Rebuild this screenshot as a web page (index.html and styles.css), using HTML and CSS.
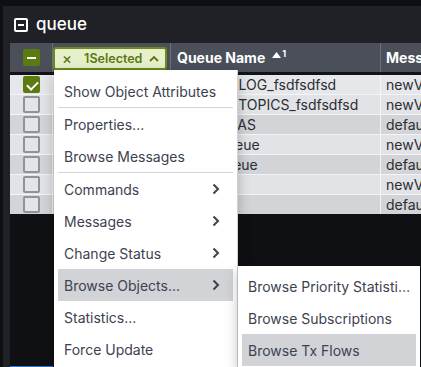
FILE: index.html
```html
<!DOCTYPE html>
<html lang="en">
<head>
    <meta charset="UTF-8">
    <meta name="viewport" content="width=device-width, initial-scale=1.0">
    <title>queue</title>
    <link rel="stylesheet" href="styles.css">
</head>
<body>
    <div class="panel">
        <div class="panel-head">
            <span class="collapse-icon"></span>
            <h1>queue</h1>
        </div>

        <div class="grid">
            <div class="grid-head">
                <div class="col col-check">
                    <span class="box box-on box-partial"></span>
                </div>
                <div class="col col-select">
                    <button class="selected-pill">
                        <span class="pill-x">×</span>
                        <span class="pill-label">1 Selected</span>
                        <svg class="pill-caret" width="10" height="7" viewBox="0 0 10 7"><path d="M1 6l4-4 4 4" fill="none" stroke="currentColor" stroke-width="1.8"/></svg>
                    </button>
                </div>
                <div class="col col-name">
                    Queue Name
                    <span class="sort"><svg width="9" height="6" viewBox="0 0 9 6"><path d="M0 6L4.5 0 9 6z" fill="#fff"/></svg><sup>1</sup></span>
                </div>
                <div class="col col-msg">Message Channel</div>
            </div>

            <div class="rows">
                <div class="row odd selected">
                    <div class="cell col-check"><span class="box box-on"></span></div>
                    <div class="cell col-select"></div>
                    <div class="cell col-name">SYSTEM.LOG_fsdfsdfsd</div>
                    <div class="cell col-msg">newVM1</div>
                </div>
                <div class="row">
                    <div class="cell col-check"><span class="box"></span></div>
                    <div class="cell col-select"></div>
                    <div class="cell col-name">SYSTEM.TOPICS_fsdfsdfsd</div>
                    <div class="cell col-msg">newVM1</div>
                </div>
                <div class="row odd">
                    <div class="cell col-check"><span class="box"></span></div>
                    <div class="cell col-select"></div>
                    <div class="cell col-name">ORDERS.AS</div>
                    <div class="cell col-msg">default</div>
                </div>
                <div class="row">
                    <div class="cell col-check"><span class="box"></span></div>
                    <div class="cell col-select"></div>
                    <div class="cell col-name">Local.Queue</div>
                    <div class="cell col-msg">newVM1</div>
                </div>
                <div class="row odd">
                    <div class="cell col-check"><span class="box"></span></div>
                    <div class="cell col-select"></div>
                    <div class="cell col-name">Test1.Queue</div>
                    <div class="cell col-msg">default</div>
                </div>
                <div class="row">
                    <div class="cell col-check"><span class="box"></span></div>
                    <div class="cell col-select"></div>
                    <div class="cell col-name">Q1</div>
                    <div class="cell col-msg">newVM1</div>
                </div>
                <div class="row odd">
                    <div class="cell col-check"><span class="box"></span></div>
                    <div class="cell col-select"></div>
                    <div class="cell col-name">Q2</div>
                    <div class="cell col-msg">default</div>
                </div>
            </div>

            <div class="grid-fill"></div>
            <div class="scroll-thumb"></div>
        </div>
    </div>

    <ul class="menu">
        <li class="menu-item">Show Object Attributes</li>
        <li class="menu-sep"></li>
        <li class="menu-item">Properties...</li>
        <li class="menu-item">Browse Messages</li>
        <li class="menu-sep"></li>
        <li class="menu-item has-sub">Commands <svg class="chev" width="8" height="12" viewBox="0 0 8 12"><path d="M1.5 1.5L6 6l-4.5 4.5" fill="none" stroke="currentColor" stroke-width="2"/></svg></li>
        <li class="menu-item has-sub">Messages <svg class="chev" width="8" height="12" viewBox="0 0 8 12"><path d="M1.5 1.5L6 6l-4.5 4.5" fill="none" stroke="currentColor" stroke-width="2"/></svg></li>
        <li class="menu-item has-sub">Change Status <svg class="chev" width="8" height="12" viewBox="0 0 8 12"><path d="M1.5 1.5L6 6l-4.5 4.5" fill="none" stroke="currentColor" stroke-width="2"/></svg></li>
        <li class="menu-item has-sub active">Browse Objects... <svg class="chev" width="8" height="12" viewBox="0 0 8 12"><path d="M1.5 1.5L6 6l-4.5 4.5" fill="none" stroke="currentColor" stroke-width="2"/></svg></li>
        <li class="menu-item">Statistics...</li>
        <li class="menu-item">Force Update</li>
    </ul>

    <ul class="menu submenu">
        <li class="menu-item"><span class="clip">Browse Priority Statistics</span></li>
        <li class="menu-item">Browse Subscriptions</li>
        <li class="menu-item active">Browse Tx Flows</li>
    </ul>
</body>
</html>
```

FILE: styles.css
```css
* {
    margin: 0;
    padding: 0;
    box-sizing: border-box;
}

body {
    font-family: Inter, 'Liberation Sans', sans-serif;
    background: #0e0f12;
    height: 100vh;
    overflow: hidden;
    position: relative;
}

.panel {
    margin: 6px 0 0 3px;
    height: calc(100vh - 6px);
    background: #202126;
    padding-left: 7px;
    display: flex;
    flex-direction: column;
}

.panel-head {
    height: 37px;
    display: flex;
    align-items: center;
    gap: 8px;
    padding-left: 4px;
}

.collapse-icon {
    width: 14px;
    height: 14px;
    border: 2px solid #fff;
    border-radius: 2px;
    position: relative;
}

.collapse-icon::after {
    content: '';
    position: absolute;
    left: 2px;
    right: 2px;
    top: 4px;
    height: 2px;
    background: #fff;
}

h1 {
    color: #fff;
    font-size: 17px;
    font-weight: 500;
    margin-top: -2px;
}

.grid {
    flex: 1;
    background: #0f1013;
    display: flex;
    flex-direction: column;
    overflow: hidden;
}

.grid-head {
    height: 32px;
    display: flex;
    background: #4a4f5a;
    border-bottom: 3px solid #121317;
    gap: 1px;
}

.grid-head .col {
    background: #4a4f5a;
    box-shadow: 1px 0 0 #6b707b;
    display: flex;
    align-items: center;
    color: #fff;
    font-weight: 700;
    font-size: 14px;
    white-space: nowrap;
}

.col-check {
    width: 42px;
    flex: none;
    justify-content: center;
}

.col-select {
    width: 117px;
    flex: none;
}

.col-name {
    width: 209px;
    flex: none;
    padding-left: 6px;
}

.col-msg {
    width: 120px;
    flex: none;
    padding-left: 5px;
}

.grid-head .col-select {
    align-items: flex-start;
    padding-top: 4px;
}

.selected-pill {
    width: 114px;
    height: 23px;
    background: #e7f0cb;
    border: 2px solid #6b8a1c;
    border-radius: 3px;
    color: #5a7812;
    font-family: inherit;
    font-weight: 600;
    font-size: 12.5px;
    display: flex;
    align-items: center;
    padding: 0 6px 0 7px;
}

.pill-x {
    font-size: 15px;
    font-weight: 500;
    line-height: 1;
}

.pill-label {
    margin-left: 12px;
    word-spacing: -3px;
}

.pill-caret {
    margin-left: auto;
}

.sort {
    display: flex;
    align-items: flex-start;
    margin-left: 7px;
    margin-top: -6px;
}

.sort sup {
    font-size: 9px;
    line-height: 1;
    margin-left: 1px;
    margin-top: -3px;
}

.rows {
    display: flex;
    flex-direction: column;
    gap: 1px;
    background: #f3f4f6;
}

.row {
    height: 19px;
    display: flex;
    gap: 1px;
}

.cell {
    background: #e2e3e6;
    display: flex;
    align-items: center;
    color: #2a2d33;
    font-size: 14px;
    white-space: nowrap;
    overflow: hidden;
}

.row.odd .cell {
    background: #d2d4d8;
}

.row.selected .cell {
    background: #e6e7ea;
}

.box {
    width: 17px;
    height: 17px;
    border: 2px solid #8d929b;
    border-radius: 2px;
    background: #e3e4e7;
    position: relative;
}

.box-on {
    background: #5b7a10;
    border-color: #5b7a10;
}

.box-on::after {
    content: '';
    position: absolute;
    left: 4px;
    top: 1px;
    width: 5px;
    height: 9px;
    border: solid #fff;
    border-width: 0 2px 2px 0;
    transform: rotate(45deg);
}

.box-partial::after {
    left: 2px;
    right: 2px;
    top: 6px;
    width: auto;
    height: 2px;
    border: none;
    background: #fff;
    transform: none;
}

.grid-fill {
    flex: 1;
}

.scroll-thumb {
    width: 43px;
    height: 1px;
    background: #2f74c0;
}

.menu {
    list-style: none;
    position: absolute;
    left: 54px;
    top: 70px;
    width: 184px;
    background: #fff;
    border-right: 1px solid #cfd1d5;
    padding: 5px 4px 4px;
    box-shadow: 0 4px 12px rgba(0, 0, 0, 0.25);
}

.menu-item {
    height: 32px;
    display: flex;
    align-items: center;
    padding: 0 6px;
    color: #3c4250;
    font-size: 14px;
    white-space: nowrap;
}

.menu-item.active {
    background: #d1d3d7;
}

.chev {
    margin-left: auto;
    margin-right: 7px;
}

.menu-sep {
    height: 1px;
    background: #d3d5d9;
}

.submenu {
    left: 238px;
    top: 266px;
    width: 182px;
    padding-top: 4px;
    border-right: none;
}

.clip {
    overflow: hidden;
    text-overflow: ellipsis;
}
```
